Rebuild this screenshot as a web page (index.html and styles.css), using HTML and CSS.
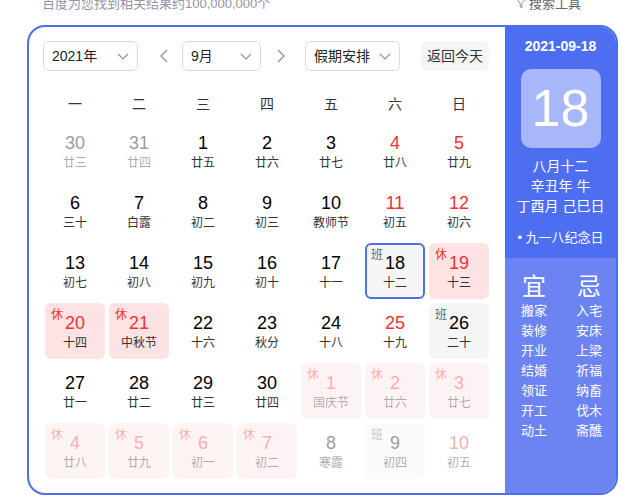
FILE: index.html
```html
<!DOCTYPE html>
<html lang="zh-CN">
<head>
  <meta charset="UTF-8">
  <meta name="viewport" content="width=device-width, initial-scale=1.0">
  <title>万年历</title>
  <link rel="stylesheet" href="styles.css">
</head>
<body>
  <div class="result-bar">
    <span class="result-num">百度为您找到相关结果约100,000,000个</span>
    <span class="search-tool">
      <svg class="funnel" width="10" height="11" viewBox="0 0 10 11"><path d="M0.8 1h8.4L5.8 5.4v4.6L4.2 9V5.4z" fill="none" stroke="#9195a3" stroke-width="1"/></svg>搜索工具
    </span>
  </div>

  <div class="calendar">
    <div class="cal-main">
      <div class="toolbar">
        <div class="select select-year">2021年<svg class="chev" width="12" height="7" viewBox="0 0 12 7"><polyline points="1,1 6,6 11,1" fill="none" stroke="#9195a3" stroke-width="1.2"/></svg></div>
        <span class="arrow arrow-prev"><svg width="9" height="14" viewBox="0 0 9 14"><polyline points="8,1 2,7 8,13" fill="none" stroke="#9195a3" stroke-width="1.4"/></svg></span>
        <div class="select select-month">9月<svg class="chev" width="12" height="7" viewBox="0 0 12 7"><polyline points="1,1 6,6 11,1" fill="none" stroke="#9195a3" stroke-width="1.2"/></svg></div>
        <span class="arrow arrow-next"><svg width="9" height="14" viewBox="0 0 9 14"><polyline points="1,1 7,7 1,13" fill="none" stroke="#9195a3" stroke-width="1.4"/></svg></span>
        <div class="select select-holiday">假期安排<svg class="chev" width="12" height="7" viewBox="0 0 12 7"><polyline points="1,1 6,6 11,1" fill="none" stroke="#9195a3" stroke-width="1.2"/></svg></div>
        <span class="btn-today">返回今天</span>
      </div>

      <div class="week">
        <span>一</span><span>二</span><span>三</span><span>四</span><span>五</span><span>六</span><span>日</span>
      </div>

      <div class="days">
        <div class="day other"><span class="num">30</span><span class="lunar">廿三</span></div>
        <div class="day other"><span class="num">31</span><span class="lunar">廿四</span></div>
        <div class="day"><span class="num">1</span><span class="lunar">廿五</span></div>
        <div class="day"><span class="num">2</span><span class="lunar">廿六</span></div>
        <div class="day"><span class="num">3</span><span class="lunar">廿七</span></div>
        <div class="day red"><span class="num">4</span><span class="lunar">廿八</span></div>
        <div class="day red"><span class="num">5</span><span class="lunar">廿九</span></div>

        <div class="day"><span class="num">6</span><span class="lunar">三十</span></div>
        <div class="day"><span class="num">7</span><span class="lunar">白露</span></div>
        <div class="day"><span class="num">8</span><span class="lunar">初二</span></div>
        <div class="day"><span class="num">9</span><span class="lunar">初三</span></div>
        <div class="day"><span class="num">10</span><span class="lunar">教师节</span></div>
        <div class="day red"><span class="num">11</span><span class="lunar">初五</span></div>
        <div class="day red"><span class="num">12</span><span class="lunar">初六</span></div>

        <div class="day"><span class="num">13</span><span class="lunar">初七</span></div>
        <div class="day"><span class="num">14</span><span class="lunar">初八</span></div>
        <div class="day"><span class="num">15</span><span class="lunar">初九</span></div>
        <div class="day"><span class="num">16</span><span class="lunar">初十</span></div>
        <div class="day"><span class="num">17</span><span class="lunar">十一</span></div>
        <div class="day work today"><i class="tag">班</i><span class="num">18</span><span class="lunar">十二</span></div>
        <div class="day rest red"><i class="tag">休</i><span class="num">19</span><span class="lunar">十三</span></div>

        <div class="day rest red"><i class="tag">休</i><span class="num">20</span><span class="lunar">十四</span></div>
        <div class="day rest red"><i class="tag">休</i><span class="num">21</span><span class="lunar">中秋节</span></div>
        <div class="day"><span class="num">22</span><span class="lunar">十六</span></div>
        <div class="day"><span class="num">23</span><span class="lunar">秋分</span></div>
        <div class="day"><span class="num">24</span><span class="lunar">十八</span></div>
        <div class="day red"><span class="num">25</span><span class="lunar">十九</span></div>
        <div class="day work"><i class="tag">班</i><span class="num">26</span><span class="lunar">二十</span></div>

        <div class="day"><span class="num">27</span><span class="lunar">廿一</span></div>
        <div class="day"><span class="num">28</span><span class="lunar">廿二</span></div>
        <div class="day"><span class="num">29</span><span class="lunar">廿三</span></div>
        <div class="day"><span class="num">30</span><span class="lunar">廿四</span></div>
        <div class="day other rest red"><i class="tag">休</i><span class="num">1</span><span class="lunar">国庆节</span></div>
        <div class="day other rest red"><i class="tag">休</i><span class="num">2</span><span class="lunar">廿六</span></div>
        <div class="day other rest red"><i class="tag">休</i><span class="num">3</span><span class="lunar">廿七</span></div>

        <div class="day other rest red"><i class="tag">休</i><span class="num">4</span><span class="lunar">廿八</span></div>
        <div class="day other rest red"><i class="tag">休</i><span class="num">5</span><span class="lunar">廿九</span></div>
        <div class="day other rest red"><i class="tag">休</i><span class="num">6</span><span class="lunar">初一</span></div>
        <div class="day other rest red"><i class="tag">休</i><span class="num">7</span><span class="lunar">初二</span></div>
        <div class="day other"><span class="num">8</span><span class="lunar">寒露</span></div>
        <div class="day other work"><i class="tag">班</i><span class="num">9</span><span class="lunar">初四</span></div>
        <div class="day other red"><span class="num">10</span><span class="lunar">初五</span></div>
      </div>
    </div>

    <div class="cal-side">
      <div class="side-top">
        <div class="side-date">2021-09-18</div>
        <div class="side-day">18</div>
        <div class="side-lunar">
          <p>八月十二</p>
          <p>辛丑年 牛</p>
          <p>丁酉月 己巳日</p>
        </div>
        <div class="side-fest">• 九一八纪念日</div>
      </div>
      <div class="side-bottom">
        <ul class="almanac">
          <li class="almanac-title">宜</li>
          <li>搬家</li><li>装修</li><li>开业</li><li>结婚</li><li>领证</li><li>开工</li><li>动土</li>
        </ul>
        <ul class="almanac">
          <li class="almanac-title">忌</li>
          <li>入宅</li><li>安床</li><li>上梁</li><li>祈福</li><li>纳畜</li><li>伐木</li><li>斋醮</li>
        </ul>
      </div>
    </div>
  </div>
</body>
</html>
```

FILE: styles.css
```css
body{
  margin: 0;
  font-family: Arial, "Liberation Sans", "Noto Sans CJK SC", sans-serif;
  color: #222;
  background: #fff;
}
p, ul{
  margin: 0;
  padding: 0;
  list-style: none;
}

.result-bar{
  display: flex;
  justify-content: space-between;
  margin-top: -3px;
  padding: 0 40px 0 42px;
  font-size: 13px;
  line-height: 13px;
  color: #9195a3;
}
.result-bar .search-tool{
  display: flex;
  align-items: center;
  color: #626675;
}
.result-bar .funnel{
  margin-right: 3px;
}

.calendar{
  display: flex;
  width: 587px;
  height: 466px;
  margin: 15px 0 0 27px;
  border: 2px solid #4e6ef2;
  border-radius: 18px;
  overflow: hidden;
}
.cal-main{
  width: 476px;
  padding: 14px 16px 0 14px;
  box-sizing: border-box;
}

.toolbar{
  display: flex;
  align-items: center;
  height: 30px;
}
.select{
  position: relative;
  height: 30px;
  box-sizing: border-box;
  padding-left: 8px;
  border: 1px solid #d7d9e0;
  border-radius: 6px;
  font-size: 14px;
  line-height: 28px;
  color: #222;
}
.select-year{ width: 95px; }
.select-month{ width: 79px; }
.select-holiday{ width: 95px; }
.select .chev{
  position: absolute;
  right: 8px;
  top: 11px;
}
.arrow{
  display: flex;
  align-items: center;
  justify-content: center;
  width: 24px;
  height: 30px;
}
.arrow-prev{ margin: 0 7px 0 13px; }
.arrow-next{ margin: 0 12px 0 8px; }
.btn-today{
  margin-left: 21px;
  width: 68px;
  height: 30px;
  border-radius: 6px;
  background: #f5f5f6;
  font-size: 14px;
  line-height: 30px;
  text-align: center;
  color: #333;
}

.week{
  display: grid;
  grid-template-columns: repeat(7, 60px);
  column-gap: 4px;
  margin: 22px 0 8px 2px;
  font-size: 14px;
  line-height: 22px;
  text-align: center;
  color: #333;
}

.days{
  display: grid;
  grid-template-columns: repeat(7, 60px);
  grid-auto-rows: 56px;
  gap: 4px;
  margin-left: 2px;
}
.day{
  position: relative;
  box-sizing: border-box;
  padding-top: 9px;
  border-radius: 6px;
  text-align: center;
}
.day .num{
  display: block;
  font-family: Arial, "Liberation Sans", sans-serif;
  font-size: 18px;
  line-height: 22px;
  color: #000;
}
.day .lunar{
  display: block;
  font-size: 12px;
  line-height: 18px;
  color: #333;
}
.day.red .num{ color: #f73131; }
.day.rest{ background: #fde3e4; }
.day.work{ background: #f5f5f6; }
.day.other{ opacity: .4; }
.day.today{
  padding-top: 7px;
  border: 2px solid #4e6ef2;
}
.day .tag{
  position: absolute;
  left: 6px;
  top: 4px;
  font-size: 12px;
  font-style: normal;
  line-height: 16px;
}
.day.today .tag{
  left: 4px;
  top: 2px;
}
.day.rest .tag{ color: #f73131; }
.day.work .tag{ color: #626675; }

.cal-side{
  display: flex;
  flex-direction: column;
  width: 111px;
  color: #fff;
  text-align: center;
}
.side-top{
  height: 231px;
  box-sizing: border-box;
  padding-top: 9px;
  background: #4e6ef2;
}
.side-date{
  font-size: 14px;
  line-height: 20px;
  font-weight: bold;
}
.side-day{
  width: 80px;
  height: 79px;
  margin: 13px auto 0;
  border-radius: 10px;
  background: rgba(255,255,255,.5);
  font-family: Arial, "Liberation Sans", sans-serif;
  font-size: 52px;
  line-height: 79px;
}
.side-lunar{
  margin-top: 8px;
  font-size: 14px;
  line-height: 20px;
}
.side-fest{
  margin-top: 12px;
  font-size: 13px;
  line-height: 20px;
}
.side-bottom{
  flex: 1;
  display: flex;
  justify-content: space-between;
  padding: 15px 14px 0 16px;
  background: #6b84f2;
}
.almanac li{
  font-size: 13px;
  line-height: 20px;
}
.almanac .almanac-title{
  font-size: 24px;
  line-height: 28px;
}
```
